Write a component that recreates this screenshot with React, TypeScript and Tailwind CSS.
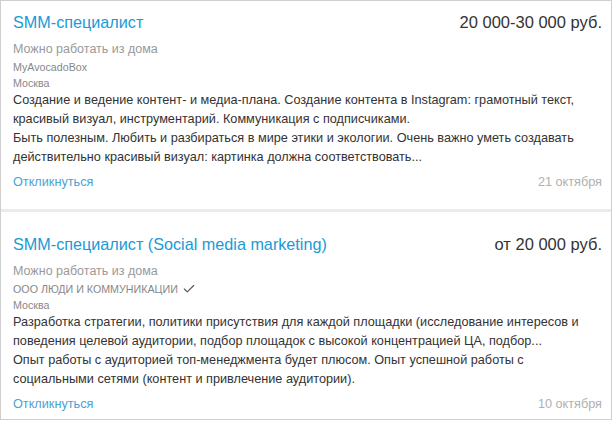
import { Check } from 'lucide-react'

type Vacancy = {
  title: string
  salary: string
  remote: string
  company: string
  verified?: boolean
  city: string
  lines: string[]
  date: string
}

const VACANCIES: Vacancy[] = [
  {
    title: 'SMM-специалист',
    salary: '20 000-30 000 руб.',
    remote: 'Можно работать из дома',
    company: 'MyAvocadoBox',
    city: 'Москва',
    lines: [
      'Создание и ведение контент- и медиа-плана. Создание контента в Instagram: грамотный текст,',
      'красивый визуал, инструментарий. Коммуникация с подписчиками.',
      'Быть полезным. Любить и разбираться в мире этики и экологии. Очень важно уметь создавать',
      'действительно красивый визуал: картинка должна соответствовать...',
    ],
    date: '21 октября',
  },
  {
    title: 'SMM-специалист (Social media marketing)',
    salary: 'от 20 000 руб.',
    remote: 'Можно работать из дома',
    company: 'ООО ЛЮДИ И КОММУНИКАЦИИ',
    verified: true,
    city: 'Москва',
    lines: [
      'Разработка стратегии, политики присутствия для каждой площадки (исследование интересов и',
      'поведения целевой аудитории, подбор площадок с высокой концентрацией ЦА, подбор...',
      'Опыт работы с аудиторией топ-менеджмента будет плюсом. Опыт успешной работы с',
      'социальными сетями (контент и привлечение аудитории).',
    ],
    date: '10 октября',
  },
]

function VacancyCard({ v, className }: { v: Vacancy; className: string }) {
  return (
    <div className={`pl-[12px] pr-[9px] ${className}`}>
      <div className="flex items-center justify-between">
        <a className="text-[16.2px] leading-[22px] text-[#1a9ad6]">{v.title}</a>
        <span className="text-[16.5px] leading-[22px] text-[#333]">{v.salary}</span>
      </div>
      <div className="mt-[7px] text-[12.5px] leading-[18px] text-[#999]">{v.remote}</div>
      <div className="flex items-center gap-[4px] text-[10.7px] leading-[18px] text-[#888]">
        {v.company}
        {v.verified && <Check className="h-[14px] w-[14px] text-[#555]" strokeWidth={2} />}
      </div>
      <div className="text-[10.7px] leading-[15px] text-[#888]">{v.city}</div>
      <div className="text-[12.7px] leading-[19px] text-[#333]">
        {v.lines.map((l, i) => (
          <div key={i} className="whitespace-nowrap">
            {l}
          </div>
        ))}
      </div>
      <div className="mt-[6px] flex items-center justify-between text-[12.7px] leading-[18px]">
        <a className="text-[#4aa3d4]">Откликнуться</a>
        <span className="text-[#b0b0b0]">{v.date}</span>
      </div>
    </div>
  )
}

export default function App() {
  return (
    <div className="h-[421px] w-[613px] bg-white font-['Liberation_Sans',Arial,sans-serif]">
      <div className="w-[612px] border border-[#cfcfcf]">
        <VacancyCard v={VACANCIES[0]} className="h-[208px] pt-[10px]" />
        <div className="h-[3px] bg-[#ebebeb]" />
        <VacancyCard v={VACANCIES[1]} className="h-[207px] pt-[21px]" />
      </div>
    </div>
  )
}
